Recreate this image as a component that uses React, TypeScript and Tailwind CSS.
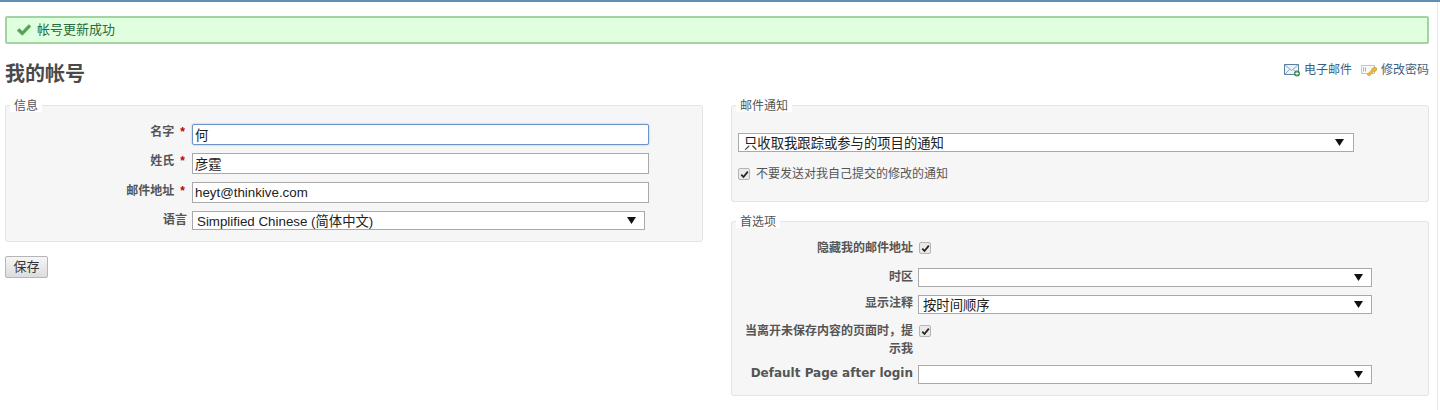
import React from "react";

const font = { fontFamily: '"Liberation Sans","Noto Sans CJK SC",sans-serif' };

function Caret() {
  return (
    <svg width="9" height="7" viewBox="0 0 9 7" className="shrink-0">
      <path d="M0 0H9L4.5 7Z" fill="#111" />
    </svg>
  );
}

function Sel({ w, h, text, px = "pl-[4px]", pr = "pr-[8px]" }: { w: string; h: string; text?: string; px?: string; pr?: string }) {
  return (
    <div className={`${w} ${h} ${px} ${pr} flex items-center justify-between border border-[#a9a9a9] bg-white text-[13.33px] leading-none text-[#222]`}>
      <span className="pt-[2px]">{text}</span>
      <Caret />
    </div>
  );
}

function Check() {
  return (
    <span className="flex h-[12px] w-[12px] shrink-0 items-center justify-center rounded-[2px] border border-[#b5b5b5] bg-[#e9e9e9]">
      <svg width="9" height="9" viewBox="0 0 9 9">
        <path d="M1.3 4.6L3.5 7L7.8 1.6" fill="none" stroke="#222" strokeWidth="1.7" />
      </svg>
    </span>
  );
}

function Box({ legend, children, cls }: { legend: string; children: React.ReactNode; cls: string }) {
  return (
    <fieldset className={`rounded-[3px] border border-[#e4e4e4] bg-[#f6f6f6] ${cls}`}>
      <legend className="ml-[4px] h-[14px] bg-white px-[4px] pt-[1px] text-[12px] leading-[14px] text-[#555]">{legend}</legend>
      {children}
    </fieldset>
  );
}

function Label({ w, text, req, cls = "" }: { w: string; text: string; req?: boolean; cls?: string }) {
  return (
    <div className={`${w} shrink-0 text-right text-[12px] font-bold text-[#555] ${cls}`}>
      {text}
      {req && <span className="ml-[6px] text-[#bb0000]">*</span>}
      {req && <span className="ml-[2px]" />}
    </div>
  );
}

function Field({ value, focus }: { value: string; focus?: boolean }) {
  return (
    <input
      readOnly
      value={value}
      className={`h-[21px] w-[457px] border bg-white px-[2px] text-[13.33px] text-[#222] outline-none ${focus ? "rounded-[2px] border-[#6d94c8] shadow-[0_0_2px_#8fb4e8]" : "border-[#a9a9a9]"}`}
    />
  );
}

export default function App() {
  return (
    <div style={font} className="h-[410px] w-[1440px] overflow-hidden border-t-2 border-[#628db6] bg-white">
      <div className="h-[408px] w-[1438px] border-r border-[#e8e8e8] pl-[5px] pr-[8px] pt-[14px]">
        <div className="flex h-[28px] w-[1424px] items-center rounded-[2px] border-2 border-[#a3d2a3] bg-[#dfffdf] pl-[9px] text-[13px] text-[#2a6b3a]">
          <svg width="16" height="14" viewBox="0 0 16 14" className="mr-[5px]">
            <path d="M1 7.5L3.5 5.5L6.3 8.3L12.8 1.5L15 3.5L6.3 12.5Z" fill="#4fa34f" stroke="#6bb36b" strokeWidth="0.5" />
          </svg>
          帐号更新成功
        </div>

        <div className="mt-[16px] flex h-[26px] w-[1424px] items-center justify-between">
          <h2 className="mt-[2px] text-[20px] font-bold leading-[26px] text-[#4a4a4a]">我的帐号</h2>
          <div className="mb-[7px] flex items-center text-[12px] text-[#3b5f7f]">
            <svg width="17" height="14" viewBox="0 0 17 14" className="mr-[3px]">
              <rect x="0.5" y="1.5" width="14" height="10" fill="#eef3f8" stroke="#5c7ea3" />
              <path d="M0.5 1.5L7.5 7.5L14.5 1.5M0.5 11.5L5.5 6.5M14.5 11.5L9.5 6.5" fill="none" stroke="#8ba6c2" />
              <circle cx="13" cy="10.5" r="3" fill="#3f8f4a" />
              <path d="M13 8.8V12.2M11.3 10.5H14.7" stroke="#fff" strokeWidth="1" />
            </svg>
            <span>电子邮件</span>
            <svg width="17" height="14" viewBox="0 0 17 14" className="ml-[9px] mr-[3px]">
              <rect x="0.5" y="2.5" width="13" height="8" fill="#f8f8f4" stroke="#bccad6" />
              <path d="M2.5 4.5V8.5M4.5 4.5V8.5" stroke="#9fb3c6" />
              <path d="M6 11.5L10.5 7.5L11 5.5L14 4L16 5.5L15 8L12.5 8.5L8.5 13Z" fill="#eeb935" stroke="#c48f1e" strokeWidth="0.6" />
            </svg>
            <span>修改密码</span>
          </div>
        </div>

        <div className="mt-[12px] flex w-[1424px] items-start gap-[28px]">
          <div className="w-[698px]">
            <Box legend="信息" cls="h-[144px]">
              <div className="mt-[12px] flex flex-col gap-[8px]">
                <div className="flex items-start gap-[5px]">
                  <Label w="w-[181px]" text="名字" req cls="leading-[16px]" />
                  <Field value="何" focus />
                </div>
                <div className="flex items-start gap-[5px]">
                  <Label w="w-[181px]" text="姓氏" req cls="leading-[16px]" />
                  <Field value="彦霆" />
                </div>
                <div className="flex items-start gap-[5px]">
                  <Label w="w-[181px]" text="邮件地址" req cls="leading-[18px]" />
                  <Field value="heyt@thinkive.com" />
                </div>
                <div className="flex items-start gap-[5px]">
                  <Label w="w-[181px]" text="语言" cls="leading-[18px]" />
                  <Sel w="w-[453px]" h="h-[19px]" text="Simplified Chinese (简体中文)" />
                </div>
              </div>
            </Box>
            <button className="mt-[14px] block h-[22px] w-[43px] rounded-[2px] border border-[#b5b5b5] bg-gradient-to-b from-[#f6f6f6] to-[#dcdcdc] text-[13px] text-[#333]">
              保存
            </button>
          </div>

          <div className="w-[698px]">
            <Box legend="邮件通知" cls="h-[104px]">
              <div className="ml-[6px] mt-[21px]">
                <Sel w="w-[616px]" h="h-[19px]" text="只收取我跟踪或参与的项目的通知" px="pl-[5px]" pr="pr-[9px]" />
                <div className="mt-[15px] flex items-center gap-[6px] text-[12px] leading-[14px] text-[#555]">
                  <Check />
                  不要发送对我自己提交的修改的通知
                </div>
              </div>
            </Box>
            <Box legend="首选项" cls="mt-[12px] h-[182px]">
              <div className="mt-[12px] flex flex-col">
                <div className="flex h-[28px] items-start gap-[6px]">
                  <Label w="w-[181px]" text="隐藏我的邮件地址" cls="leading-[16px]" />
                  <span className="pt-[2px]"><Check /></span>
                </div>
                <div className="flex h-[27px] items-start gap-[5px]">
                  <Label w="w-[181px]" text="时区" cls="leading-[18px]" />
                  <Sel w="w-[454px]" h="h-[19px]" />
                </div>
                <div className="flex h-[27px] items-start gap-[5px]">
                  <Label w="w-[181px]" text="显示注释" cls="leading-[16px]" />
                  <Sel w="w-[454px]" h="h-[19px]" text="按时间顺序" />
                </div>
                <div className="flex h-[43px] items-start gap-[6px]">
                  <Label w="w-[168px] ml-[13px]" text="当离开未保存内容的页面时，提示我" cls="leading-[18px]" />
                  <span className="pt-[3px]"><Check /></span>
                </div>
                <div className="flex items-start gap-[5px]">
                  <Label w="w-[181px]" text="Default Page after login" cls="[font-family:'DejaVu_Sans'] text-[11.3px] leading-[16px]" />
                  <Sel w="w-[454px]" h="h-[19px]" />
                </div>
              </div>
            </Box>
          </div>
        </div>
      </div>
    </div>
  );
}
